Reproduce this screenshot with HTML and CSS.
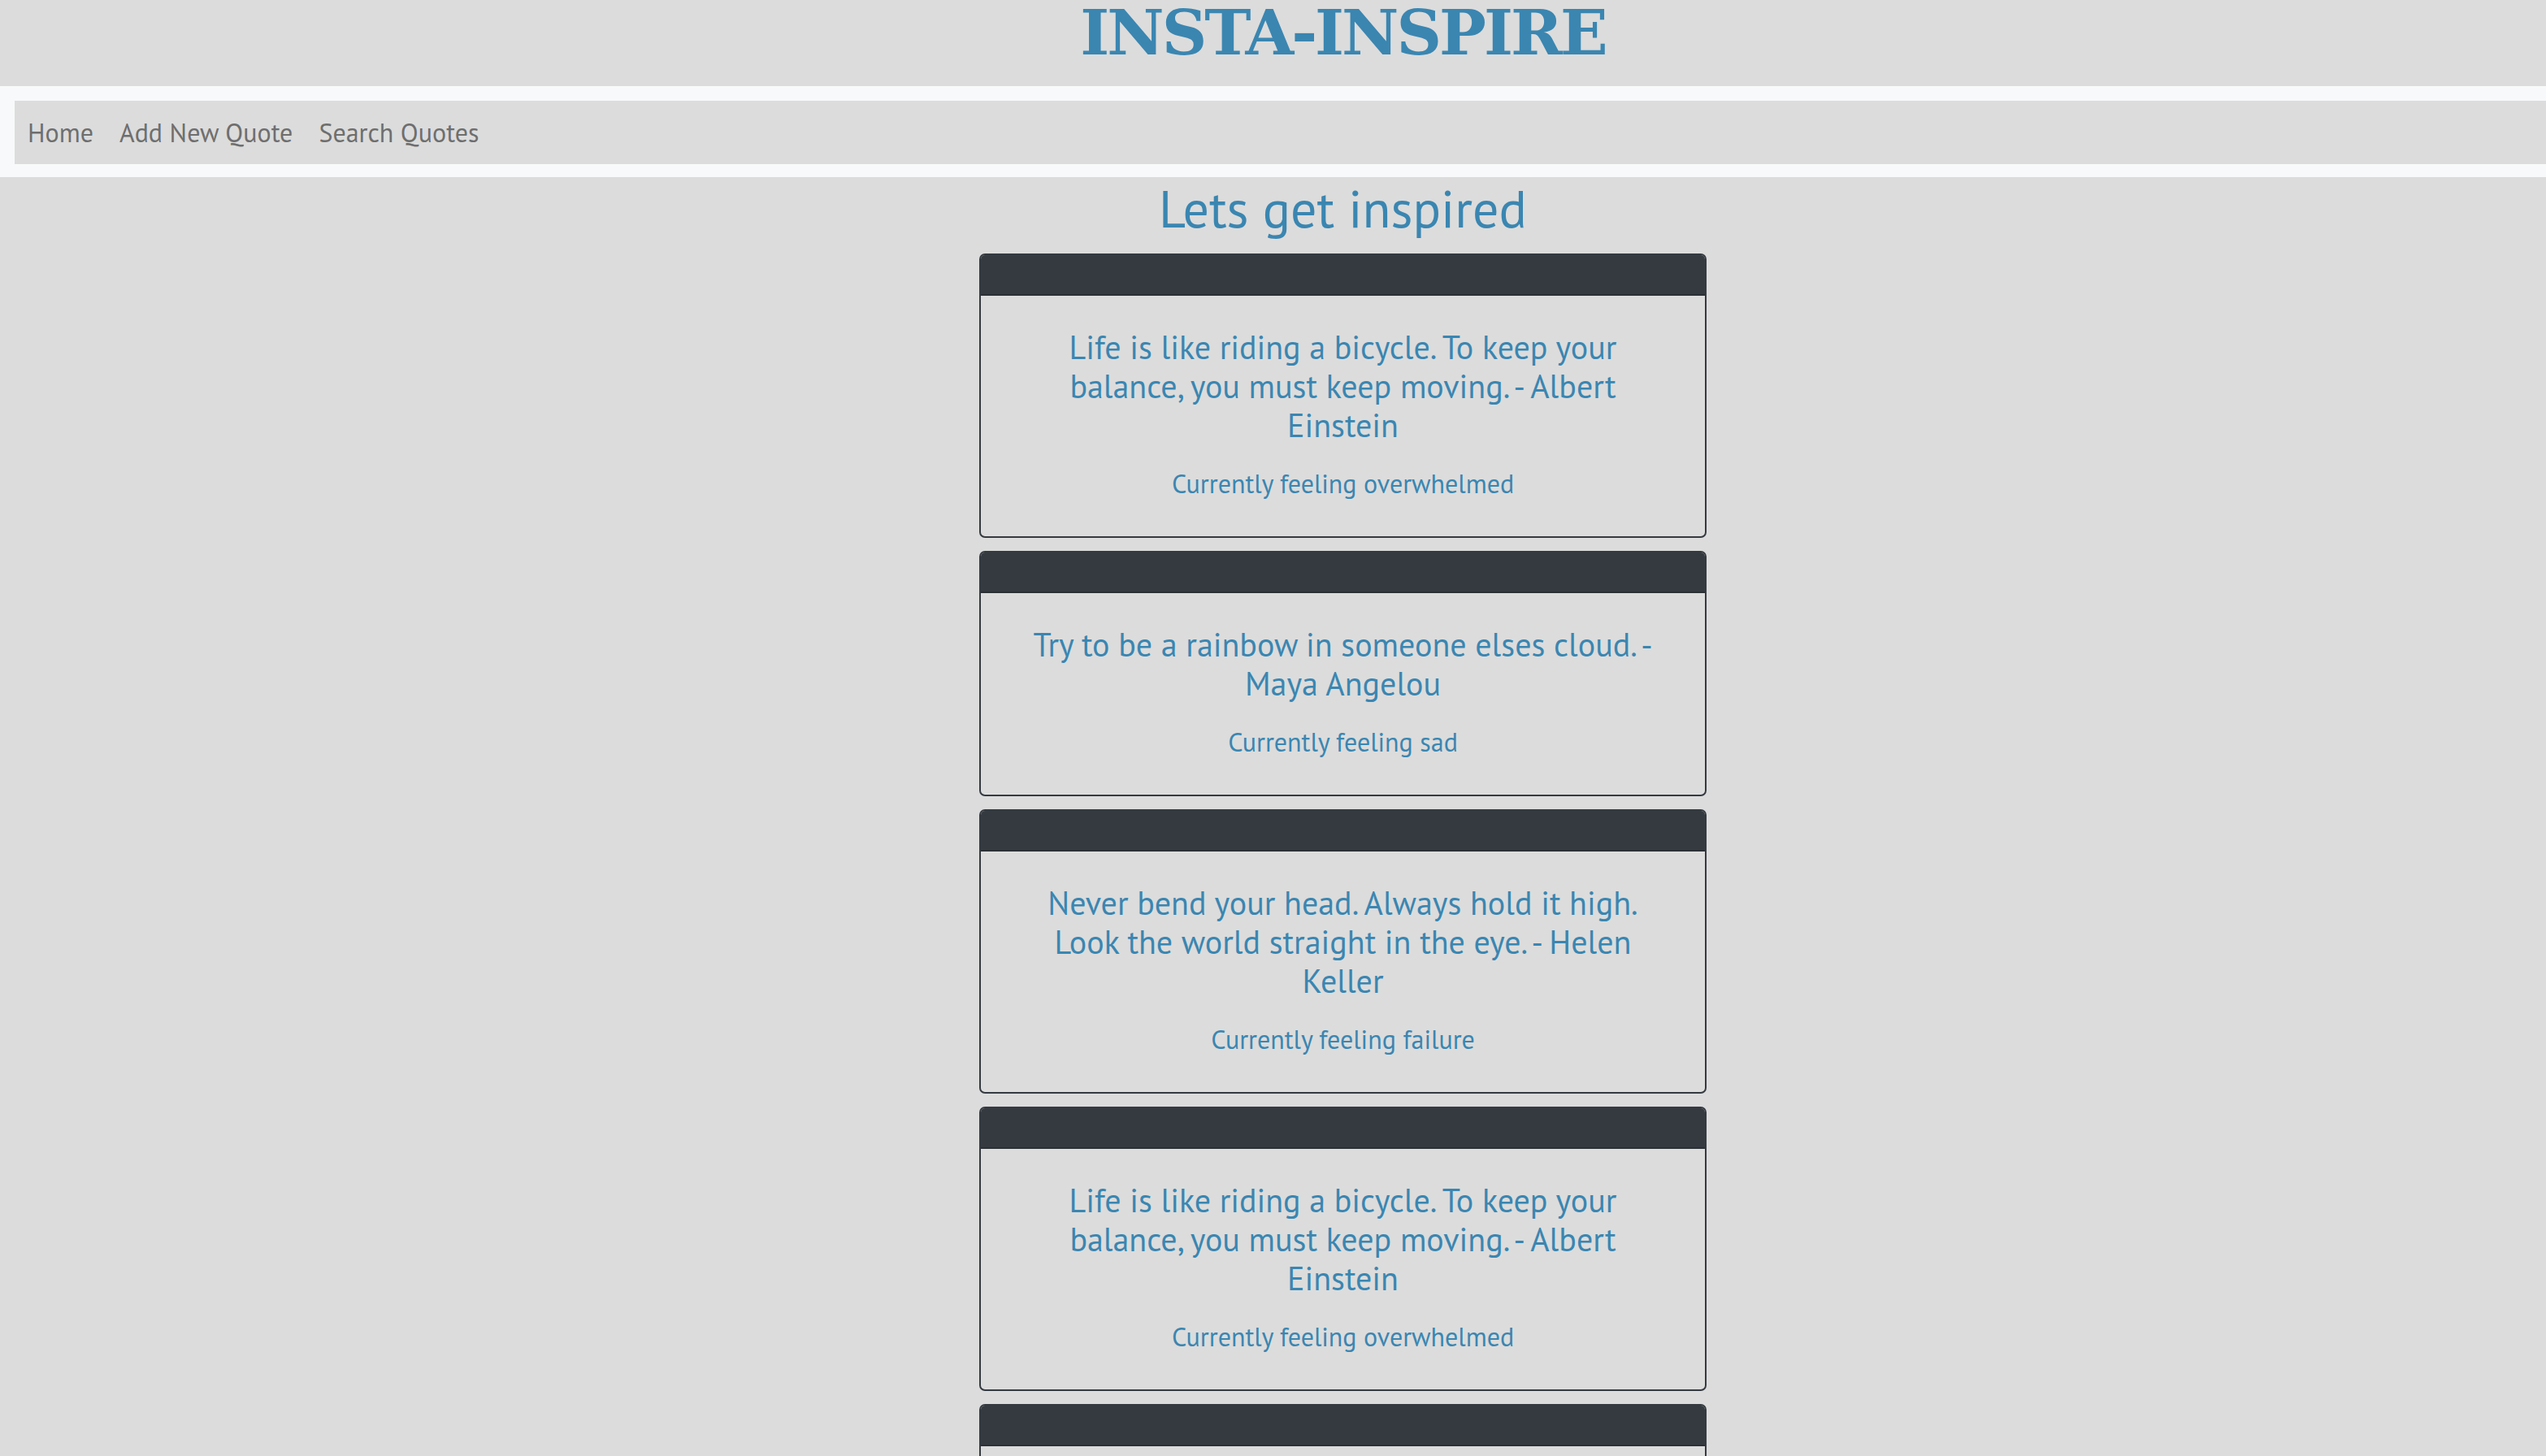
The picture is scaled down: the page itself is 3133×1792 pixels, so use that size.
FILE: index.html
```html
<!DOCTYPE html>
<html lang="en">
<head>
<meta charset="utf-8">
<title>Insta-Inspire</title>
<link rel="stylesheet" href="styles.css">
</head>
<body>
<header class="brand">
  <h1 class="brand-title">INSTA-INSPIRE</h1>
</header>
<nav class="navbar">
  <div class="nav-inner">
    <a class="nav-link" href="#">Home</a>
    <a class="nav-link" href="#">Add New Quote</a>
    <a class="nav-link" href="#">Search Quotes</a>
  </div>
</nav>
<main class="content">
  <h2 class="page-heading">Lets get inspired</h2>
  <div class="card">
    <div class="card-header"></div>
    <div class="card-body">
      <h5 class="quote">Life is like riding a bicycle. To keep your balance, you must keep moving. - Albert Einstein</h5>
      <h6 class="feeling">Currently feeling overwhelmed</h6>
    </div>
  </div>
  <div class="card">
    <div class="card-header"></div>
    <div class="card-body">
      <h5 class="quote">Try to be a rainbow in someone elses cloud. - Maya Angelou</h5>
      <h6 class="feeling">Currently feeling sad</h6>
    </div>
  </div>
  <div class="card">
    <div class="card-header"></div>
    <div class="card-body">
      <h5 class="quote">Never bend your head. Always hold it high. Look the world straight in the eye. - Helen Keller</h5>
      <h6 class="feeling">Currently feeling failure</h6>
    </div>
  </div>
  <div class="card">
    <div class="card-header"></div>
    <div class="card-body">
      <h5 class="quote">Life is like riding a bicycle. To keep your balance, you must keep moving. - Albert Einstein</h5>
      <h6 class="feeling">Currently feeling overwhelmed</h6>
    </div>
  </div>
  <div class="card">
    <div class="card-header"></div>
    <div class="card-body">
      <h5 class="quote">Try to be a rainbow in someone elses cloud. - Maya Angelou</h5>
      <h6 class="feeling">Currently feeling sad</h6>
    </div>
  </div>
</main>
</body>
</html>
```
FILE: styles.css
```css
html, body {
  margin: 0;
  padding: 0;
}

body {
  background: #dcdcdc;
  font-family: "PT Sans", "Open Sans", sans-serif;
  color: #3a86b1;
  overflow: hidden;
}

.brand {
  height: 106px;
  padding-left: 172px;
  text-align: center;
  box-sizing: border-box;
}

.brand-title {
  margin: 0;
  font-family: "DejaVu Serif", serif;
  font-weight: 700;
  font-size: 77px;
  line-height: 80px;
  letter-spacing: -3px;
  color: #3a86b1;
}

.navbar {
  background: #f8f9fa;
  padding: 18px 0 16px 18px;
}

.nav-inner {
  background: #dcdcdc;
  height: 78px;
  display: flex;
  align-items: center;
}

.nav-link {
  padding: 0 16px;
  font-size: 32px;
  color: #6e6e6e;
  text-decoration: none;
}

.content {
  padding-left: 172px;
  display: flex;
  flex-direction: column;
  align-items: center;
}

.page-heading {
  margin: 1px 0 16px;
  font-size: 64px;
  line-height: 1.2;
  font-weight: 400;
  color: #3a86b1;
}

.card {
  width: 895px;
  box-sizing: border-box;
  border: 2px solid #343a40;
  border-radius: 7px;
  margin-bottom: 16px;
  overflow: hidden;
}

.card-header {
  background: #343a40;
  height: 48px;
  border-bottom: 2px solid #2b3035;
}

.card-body {
  padding: 39px 40px 40px;
  text-align: center;
}

.quote {
  margin: 0 0 28px;
  font-size: 40px;
  line-height: 1.2;
  font-weight: 400;
  color: #3a86b1;
}

.feeling {
  margin: 0 0 5px;
  font-size: 32px;
  line-height: 40px;
  font-weight: 400;
  color: #3a86b1;
}
```
